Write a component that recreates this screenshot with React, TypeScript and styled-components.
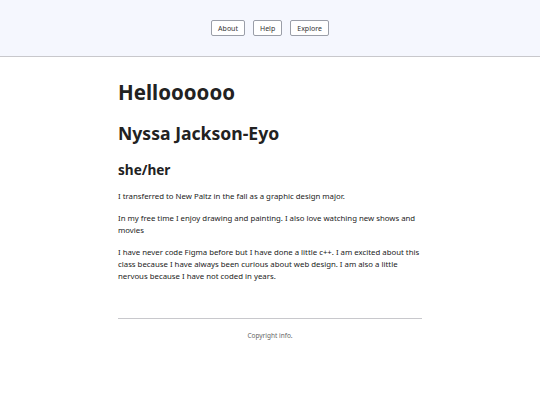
import styled, { createGlobalStyle } from 'styled-components'

const GlobalStyle = createGlobalStyle`
  body {
    margin: 0;
    font-family: 'Noto Sans', 'Open Sans', sans-serif;
    color: #222;
    background: #fff;
  }
`

const links = ['About', 'Help', 'Explore']

export default function App() {
  return (
    <>
      <GlobalStyle />
      <Header>
        <Nav>
          {links.map((label) => (
            <NavButton key={label}>{label}</NavButton>
          ))}
        </Nav>
      </Header>
      <Main>
        <Title>Helloooooo</Title>
        <Name>Nyssa Jackson-Eyo</Name>
        <Pronouns>she/her</Pronouns>
        <Text>I transferred to New Paltz in the fall as a graphic design major.</Text>
        <Text>In my free time I enjoy drawing and painting. I also love watching new shows and movies</Text>
        <Text>
          I have never code Figma before but I have done a little c++. I am excited about this class because I
          have always been curious about web design. I am also a little nervous because I have not coded in years.
        </Text>
        <Footer>Copyright info.</Footer>
      </Main>
    </>
  )
}

const Header = styled.header`
  height: 56px;
  background: #f5f7fe;
  border-bottom: 1px solid #c8c8cc;
  display: flex;
  align-items: center;
  justify-content: center;
`

const Nav = styled.nav`
  display: flex;
  gap: 8px;
`

const NavButton = styled.button`
  font-family: 'Noto Sans', sans-serif;
  font-size: 7px;
  color: #333;
  background: #fff;
  border: 1px solid #9a9ea8;
  border-radius: 2px;
  height: 16px;
  padding: 0 6px;
`

const Main = styled.main`
  width: 304px;
  margin: 0 auto;
  padding-top: 21px;
`

const Title = styled.h1`
  font-size: 20.5px;
  font-weight: 700;
  line-height: 28px;
  margin: 0 0 15px;
`

const Name = styled.h2`
  font-size: 17.6px;
  font-weight: 700;
  line-height: 24px;
  margin: 0 0 15px;
`

const Pronouns = styled.h3`
  font-size: 13.6px;
  font-weight: 700;
  line-height: 20px;
  margin: 0 0 10px;
`

const Text = styled.p`
  font-size: 7.8px;
  line-height: 12px;
  margin: 0 0 10px;
`

const Footer = styled.footer`
  margin-top: 36px;
  border-top: 1px solid #c8c8cc;
  padding-top: 12px;
  line-height: 10px;
  text-align: center;
  font-size: 6.5px;
  color: #666;
`
